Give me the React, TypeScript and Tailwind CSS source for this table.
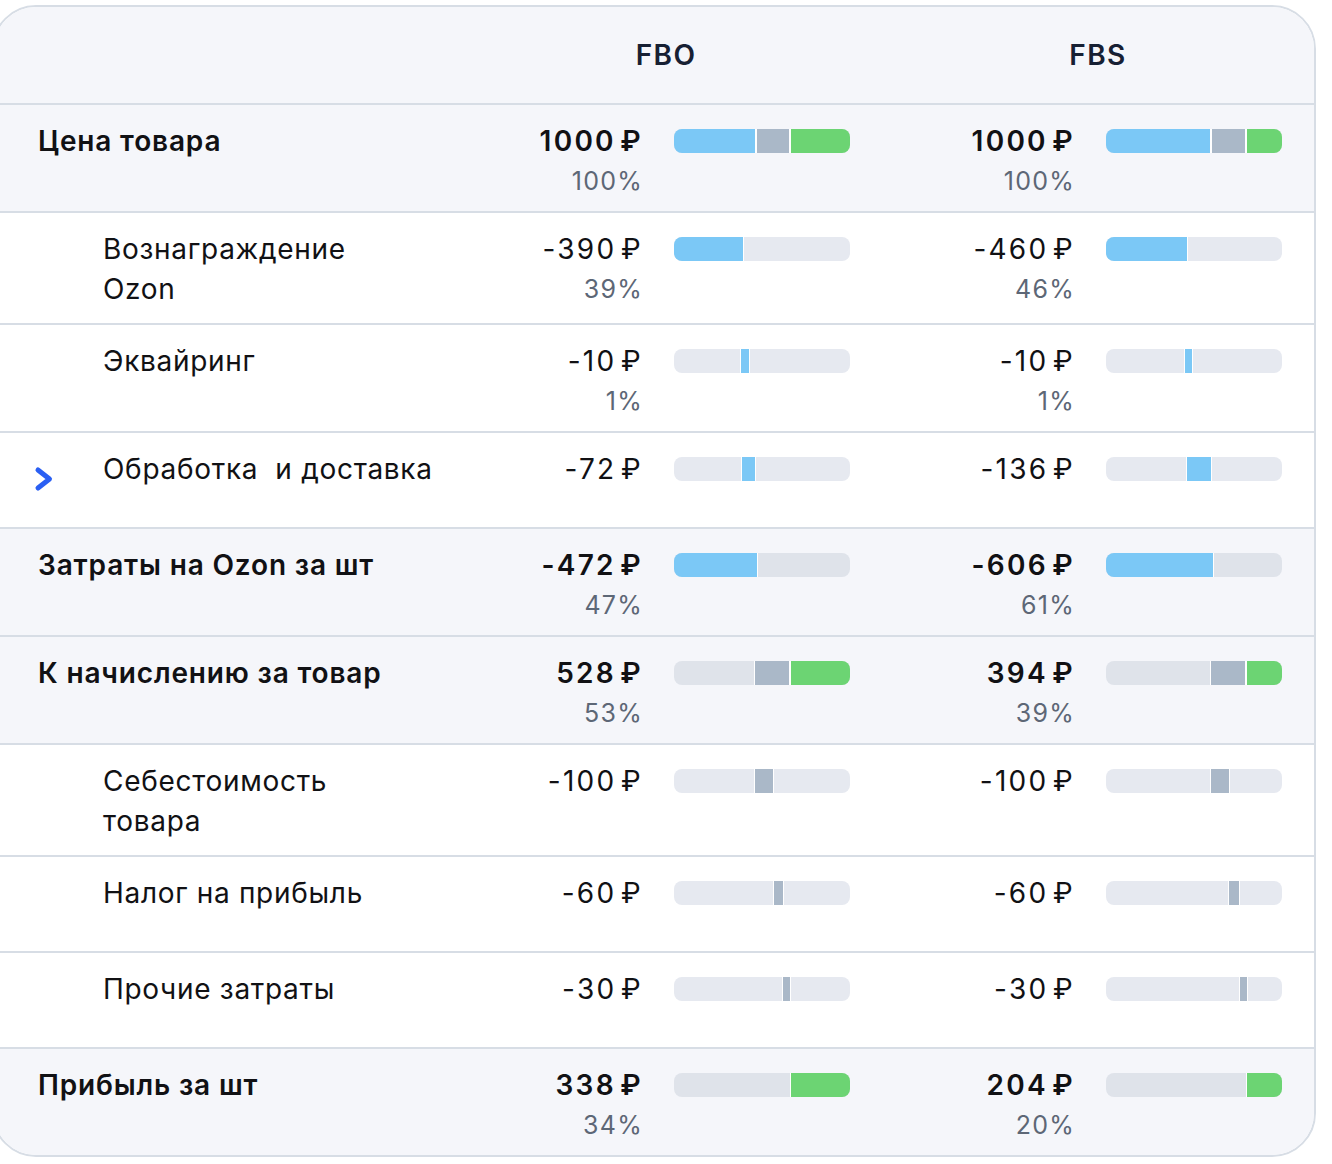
import React from "react";

type Seg = [number, number, "b" | "g" | "n"];
type Cell = { v: string; p?: string; segs: Seg[] };
type Row = {
  label: string[];
  bold?: boolean;
  gray?: boolean;
  chevron?: boolean;
  h: "a" | "b" | "c";
  fbo: Cell;
  fbs: Cell;
};

const R = "\u200a₽";

const rows: Row[] = [
  {
    label: ["Цена товара"], bold: true, gray: true, h: "a",
    fbo: { v: "1000" + R, p: "100%", segs: [[0, 82, "b"], [82, 116, "g"], [116, 176, "n"]] },
    fbs: { v: "1000" + R, p: "100%", segs: [[0, 105, "b"], [105, 140, "g"], [140, 176, "n"]] },
  },
  {
    label: ["Вознаграждение", "Ozon"], h: "b",
    fbo: { v: "-390" + R, p: "39%", segs: [[0, 70, "b"]] },
    fbs: { v: "-460" + R, p: "46%", segs: [[0, 82, "b"]] },
  },
  {
    label: ["Эквайринг"], h: "a",
    fbo: { v: "-10" + R, p: "1%", segs: [[66, 76, "b"]] },
    fbs: { v: "-10" + R, p: "1%", segs: [[78, 87, "b"]] },
  },
  {
    label: ["Обработка\u00a0 и доставка"], chevron: true, h: "c",
    fbo: { v: "-72" + R, segs: [[67, 82, "b"]] },
    fbs: { v: "-136" + R, segs: [[80, 106, "b"]] },
  },
  {
    label: ["Затраты на Ozon за шт"], bold: true, gray: true, h: "a",
    fbo: { v: "-472" + R, p: "47%", segs: [[0, 84, "b"]] },
    fbs: { v: "-606" + R, p: "61%", segs: [[0, 108, "b"]] },
  },
  {
    label: ["К начислению за товар"], bold: true, gray: true, h: "a",
    fbo: { v: "528" + R, p: "53%", segs: [[80, 116, "g"], [116, 176, "n"]] },
    fbs: { v: "394" + R, p: "39%", segs: [[104, 140, "g"], [140, 176, "n"]] },
  },
  {
    label: ["Себестоимость", "товара"], h: "b",
    fbo: { v: "-100" + R, segs: [[80, 100, "g"]] },
    fbs: { v: "-100" + R, segs: [[104, 124, "g"]] },
  },
  {
    label: ["Налог на прибыль"], h: "c",
    fbo: { v: "-60" + R, segs: [[99, 110, "g"]] },
    fbs: { v: "-60" + R, segs: [[122, 134, "g"]] },
  },
  {
    label: ["Прочие затраты"], h: "c",
    fbo: { v: "-30" + R, segs: [[108, 117, "g"]] },
    fbs: { v: "-30" + R, segs: [[133, 142, "g"]] },
  },
  {
    label: ["Прибыль за шт"], bold: true, gray: true, h: "a",
    fbo: { v: "338" + R, p: "34%", segs: [[116, 176, "n"]] },
    fbs: { v: "204" + R, p: "20%", segs: [[140, 176, "n"]] },
  },
];

const segColor: Record<string, string> = {
  b: "bg-[#7bc8f6]",
  g: "bg-[#aab8c8]",
  n: "bg-[#6cd473]",
};

function Bar({ segs, gray }: { segs: Seg[]; gray?: boolean }) {
  return (
    <div
      className={
        "relative mt-[8px] h-[24px] w-[176px] shrink-0 overflow-hidden rounded-[8px] " +
        (gray ? "bg-[#dfe3ea]" : "bg-[#e6e9f0]")
      }
    >
      {segs.map(([s, e, c], i) => (
        <div
          key={i}
          className={
            "absolute top-0 h-full border-white " +
            segColor[c] +
            (s > 0 ? " border-l-[1.5px]" : "") +
            (e < 176 ? " border-r-[1.5px]" : "")
          }
          style={{ left: s, width: e - s }}
        />
      ))}
    </div>
  );
}

function DataCell({ cell, bold, gray }: { cell: Cell; bold?: boolean; gray?: boolean }) {
  return (
    <div className="flex w-[432px] shrink-0 items-start pr-[32px]">
      <div className="mr-[-2px] flex flex-1 flex-col items-end">
        <div
          className={
            "text-[28px] leading-[40px] tracking-[0.08em] text-[#111114] " +
            (bold ? "font-semibold" : "font-normal")
          }
        >
          {cell.v}
        </div>
        {cell.p && (
          <div className="text-[25px] leading-[40px] tracking-[0.05em] text-[#5d6776]">
            {cell.p}
          </div>
        )}
      </div>
      <div className="ml-[33px]">
        <Bar segs={cell.segs} gray={gray} />
      </div>
    </div>
  );
}

function Chevron() {
  return (
    <svg width="24" height="30" viewBox="0 0 24 30" className="absolute left-[-6px] top-[16px]">
      <path
        d="M5 5 L16.5 14 L5 23"
        fill="none"
        stroke="#2a5ff3"
        strokeWidth="5"
        strokeLinecap="round"
        strokeLinejoin="round"
      />
    </svg>
  );
}

const heights: Record<string, string> = {
  a: "h-[108px]",
  b: "h-[112px]",
  c: "h-[96px]",
};

export default function App() {
  return (
    <div
      className="min-h-[1164px] w-[1332px] overflow-hidden bg-white pt-[5px]"
      style={{ fontFamily: "Inter, 'Noto Sans', 'Liberation Sans', sans-serif" }}
    >
      <div className="ml-[-8px] w-[1324px] overflow-hidden rounded-[44px] border-2 border-[#d7dde5] bg-white">
        <div className="flex h-[96px] bg-[#f5f6fa]">
          <div className="w-[456px] shrink-0" />
          <div className="flex w-[432px] shrink-0 items-center justify-center text-[28px] font-semibold tracking-[0.05em] text-[#172033]">
            FBO
          </div>
          <div className="flex w-[432px] shrink-0 items-center justify-center text-[28px] font-semibold tracking-[0.05em] text-[#172033]">
            FBS
          </div>
        </div>
        {rows.map((r, i) => (
          <div
            key={i}
            className={
              "flex border-t-2 border-[#d7dde5] pt-[16px] " +
              heights[r.h] +
              " " +
              (r.gray ? "bg-[#f5f6fa]" : "bg-white")
            }
          >
            <div className={"relative w-[456px] shrink-0 " + (r.bold ? "pl-[44px]" : "pl-[109px]")}>
              {r.chevron && (
                <div className="absolute left-[45px] top-0">
                  <Chevron />
                </div>
              )}
              {r.label.map((l, j) => (
                <div
                  key={j}
                  className={
                    "whitespace-pre text-[28px] leading-[40px] text-[#111114] " +
                    (r.bold ? "font-semibold tracking-[0.03em]" : "font-normal tracking-[0.025em]")
                  }
                >
                  {l}
                </div>
              ))}
            </div>
            <DataCell cell={r.fbo} bold={r.bold} gray={r.gray} />
            <DataCell cell={r.fbs} bold={r.bold} gray={r.gray} />
          </div>
        ))}
      </div>
    </div>
  );
}
